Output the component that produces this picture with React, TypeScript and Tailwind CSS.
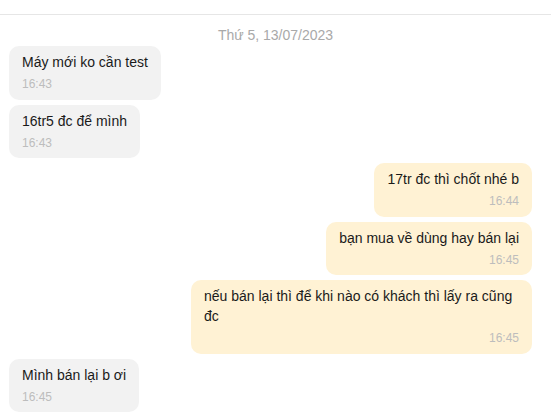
type Msg = { text: string; time: string; mine: boolean };

const messages: Msg[] = [
  { text: "Máy mới ko cần test", time: "16:43", mine: false },
  { text: "16tr5 đc để mình", time: "16:43", mine: false },
  { text: "17tr đc thì chốt nhé b", time: "16:44", mine: true },
  { text: "bạn mua về dùng hay bán lại", time: "16:45", mine: true },
  { text: "nếu bán lại thì để khi nào có khách thì lấy ra cũng đc", time: "16:45", mine: true },
  { text: "Mình bán lại b ơi", time: "16:45", mine: false },
  { text: "Ok b, vậy mai mình qua chỗ b lấy máy nhé", time: "16:46", mine: true },
];

const Bubble = ({ msg }: { msg: Msg }) => {
  return (
    <div className={msg.mine ? "flex justify-end" : "flex justify-start"}>
      <div
        className={
          msg.mine
            ? "max-w-[341px] rounded-[10px] bg-[#fff2d4] px-[13px] pt-[6px] pb-[5.5px]"
            : "max-w-[341px] rounded-[10px] bg-[#f2f2f2] px-[13px] pt-[6px] pb-[5.5px]"
        }
      >
        <div className="text-[14px] leading-[20px] text-[#1a1a1a]">{msg.text}</div>
        <div
          className={
            msg.mine
              ? "mt-[2px] text-right text-[12px] leading-[20px] text-[#bdbdbd]"
              : "mt-[2px] text-left text-[12px] leading-[20px] text-[#bdbdbd]"
          }
        >
          {msg.time}
        </div>
      </div>
    </div>
  );
};

export default function App() {
  return (
    <div className="h-[417px] overflow-hidden bg-white font-['Liberation_Sans',Arial,sans-serif]">
      <div className="h-[15px] border-b border-[#e6e6e6]" />
      <div className="pt-[12px] pb-[3px] text-center text-[14px] leading-[16px] text-[#a9a9a9]">
        Thứ 5, 13/07/2023
      </div>
      <div className="flex flex-col gap-[5px] pl-[9px] pr-[19px]">
        {messages.map((m, i) => (
          <Bubble key={i} msg={m} />
        ))}
      </div>
    </div>
  );
}
